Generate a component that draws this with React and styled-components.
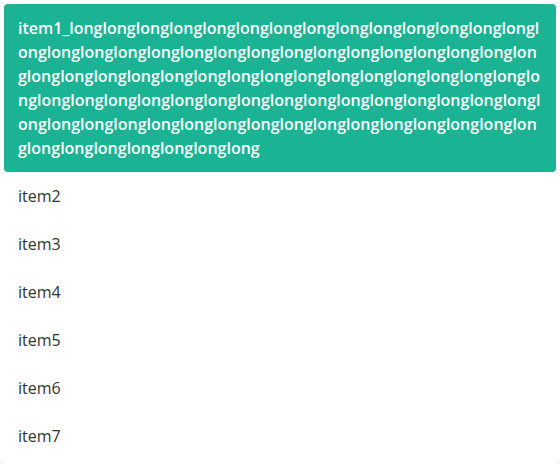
import React from 'react';
import styled, { createGlobalStyle } from 'styled-components';

const GlobalStyle = createGlobalStyle`
  html, body {
    margin: 0;
    padding: 0;
    background: #f3f3f4;
  }
  body {
    font-family: "Open Sans", "Liberation Sans", sans-serif;
  }
`;

const items = [
  'item1_' + 'long'.repeat(84),
  'item2',
  'item3',
  'item4',
  'item5',
  'item6',
  'item7',
];

export default function App() {
  return (
    <>
      <GlobalStyle />
      <List>
        {items.map((text, i) => (
          <Item key={i} active={i === 0 ? 1 : 0}>
            {text}
          </Item>
        ))}
      </List>
    </>
  );
}

const List = styled.ul`
  list-style: none;
  margin: 0;
  padding: 4px;
  height: 464px;
  box-sizing: border-box;
  background: #fff;
  border-radius: 0 0 6px 6px;
  overflow: hidden;
`;

// active item gets the green highlight
const Item = styled.li`
  padding: 12px 14px;
  font-size: 16px;
  line-height: 24px;
  border-radius: 4px;
  word-break: break-all;
  color: ${p => (p.active ? '#fff' : '#333')};
  background: ${p => (p.active ? '#1ab394' : 'transparent')};
  font-weight: ${p => (p.active ? 600 : 400)};
`;
